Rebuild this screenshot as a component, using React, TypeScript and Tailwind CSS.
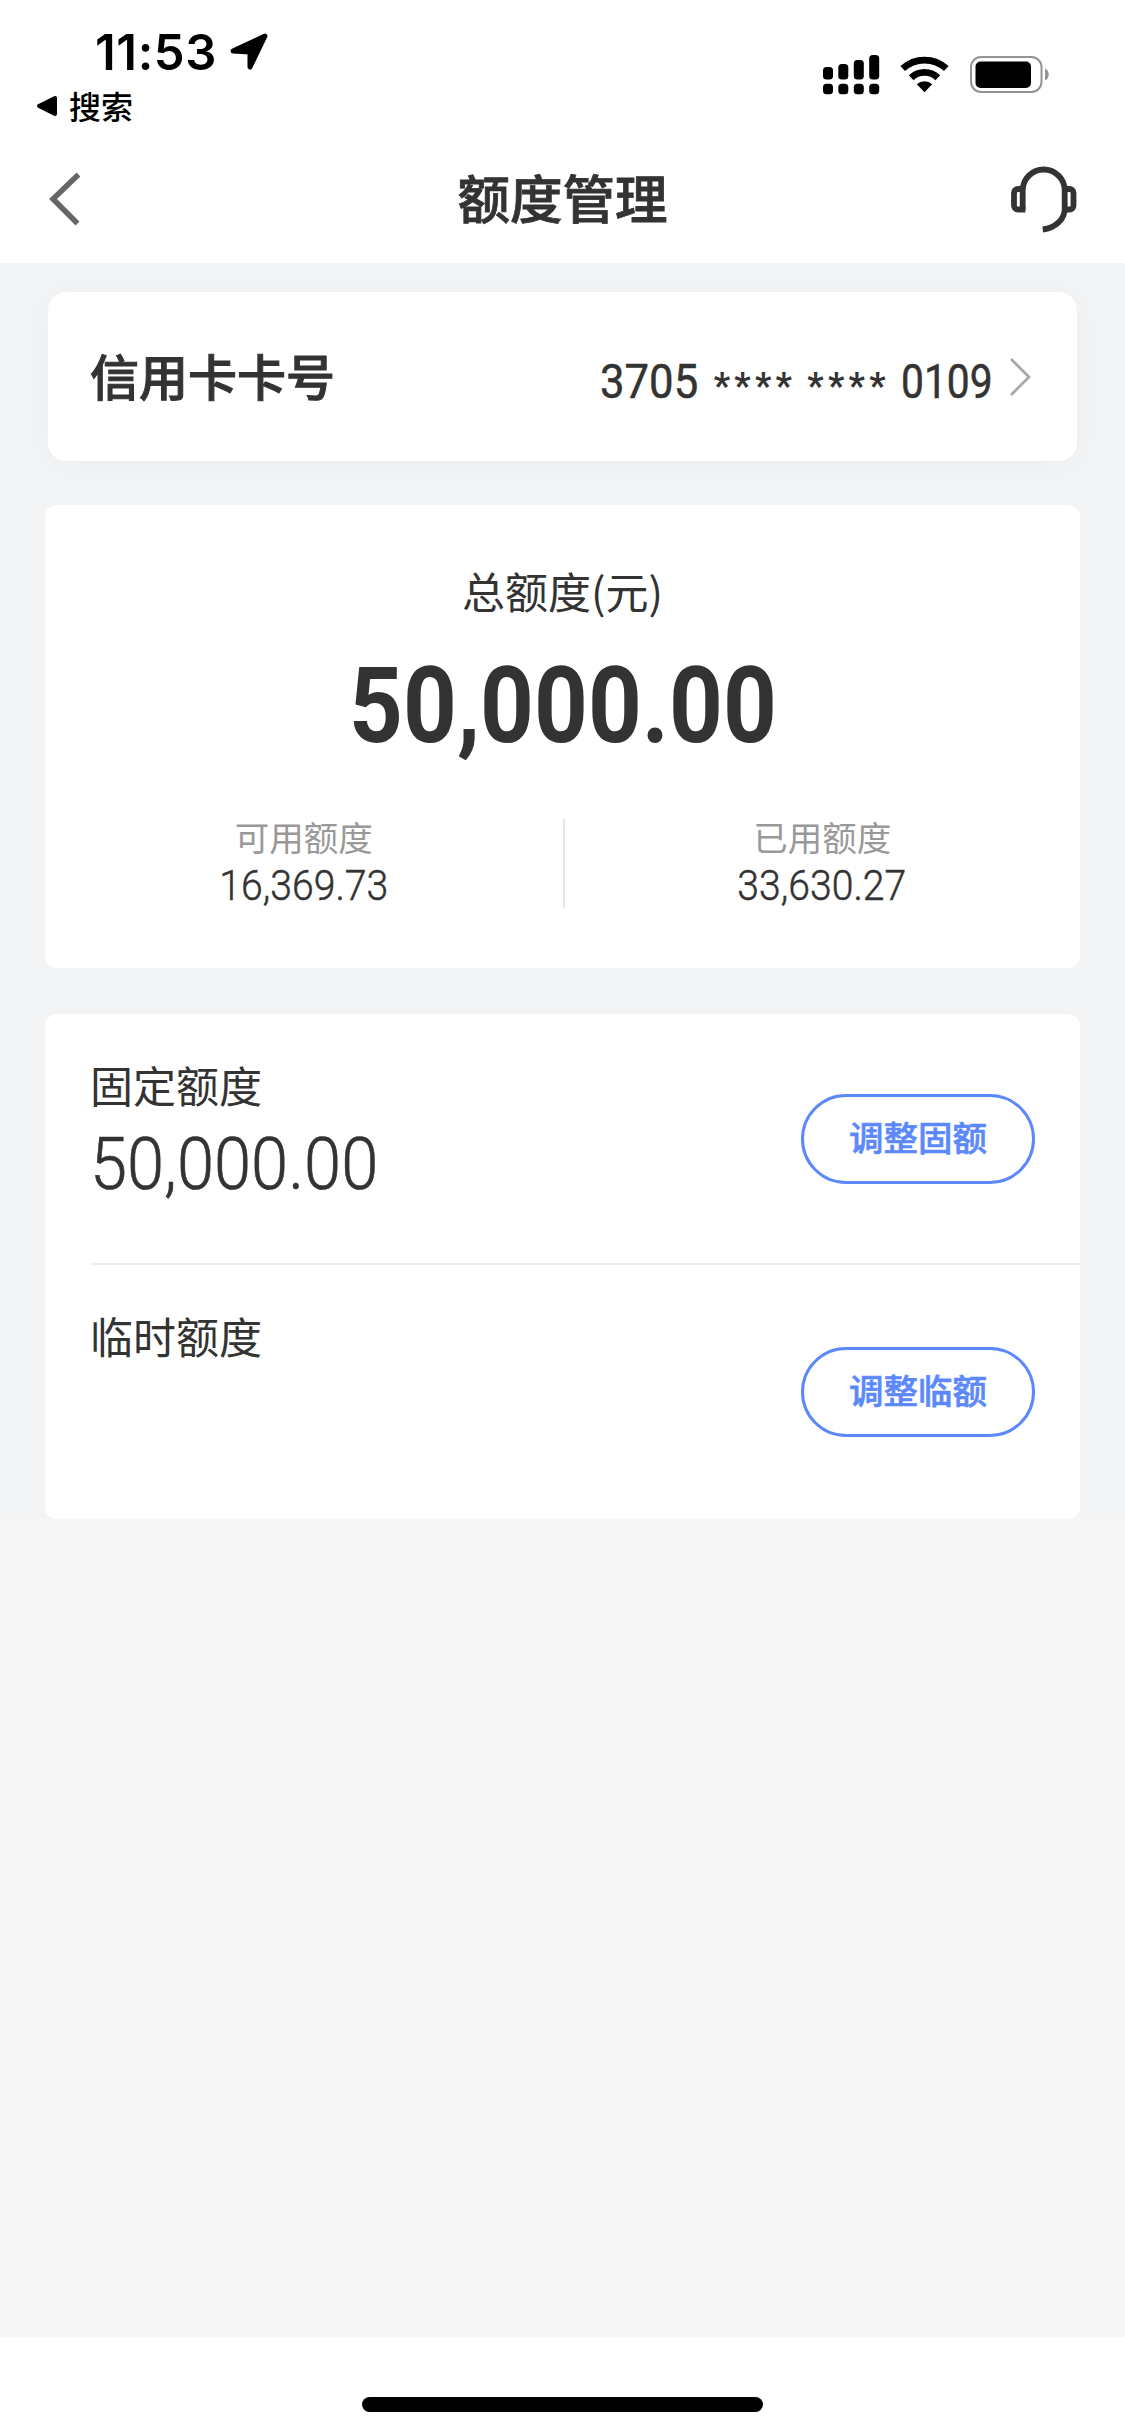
import React from 'react';
import { clsx } from 'clsx';

interface AmountProps {
    value: string;
    className?: string;
}

// Numbers use a narrow face, so Roboto is squeezed a little
const Amount: React.FC<AmountProps> = ({ value, className }) => (
    <span className={clsx("inline-block whitespace-nowrap font-['Roboto',sans-serif] leading-none", className)}>
        {value}
    </span>
);

const StatusBar: React.FC = () => (
    <div className="flex h-[136px] justify-between">
        <div className="pt-[23px]">
            <div className="flex h-[58px] items-center pl-[95px]">
                <span className="w-[135px] whitespace-nowrap font-['Inter',sans-serif] text-[49px] font-semibold leading-none tracking-[0.6px]">11:53</span>
                <svg className="h-[40px] w-[40px]" viewBox="0 0 40 40">
                    <path d="M3 19 35 4 20 35V20Z" fill="#000" stroke="#000" strokeWidth="5" strokeLinejoin="round" />
                </svg>
            </div>
            <div className="flex h-[50px] items-center pl-[36px]">
                <svg className="h-[22px] w-[22px]" viewBox="0 0 22 22">
                    <path d="M3 11 19 3V19Z" fill="#000" stroke="#000" strokeWidth="4" strokeLinejoin="round" />
                </svg>
                <span className="mb-[2px] ml-[11px] text-[32px] font-medium leading-none">搜索</span>
            </div>
        </div>
        <div className="flex items-start pr-[75px] pt-[54px]">
            <svg className="h-[42px] w-[58px]" viewBox="0 0 58 42">
                <rect x="0" y="13" width="10" height="12.5" rx="3.5" />
                <rect x="15.3" y="10" width="10" height="15.5" rx="3.5" />
                <rect x="30.8" y="6" width="10" height="19.5" rx="3.5" />
                <rect x="46.2" y="1" width="10" height="24.5" rx="3.5" />
                <rect x="0" y="29.7" width="10" height="10.5" rx="3.5" />
                <rect x="15.3" y="29.7" width="10" height="10.5" rx="3.5" />
                <rect x="30.8" y="29.7" width="10" height="10.5" rx="3.5" />
                <rect x="46.2" y="29.7" width="10" height="10.5" rx="3.5" />
            </svg>
            <svg className="ml-[19px] h-[40px] w-[50px]" viewBox="0 0 50 40">
                <path d="M2.700 14.600A32 32 0 0 1 46.300 14.600" fill="none" stroke="#000" strokeWidth="6.800" />
                <path d="M11.200 23.700A19.500 19.500 0 0 1 37.800 23.700" fill="none" stroke="#000" strokeWidth="6.800" />
                <path d="M16.800 30.200A11.300 11.300 0 0 1 32.200 30.200L24.500 38.300Z" />
            </svg>
            <svg className="ml-[20px] h-[40px] w-[80px]" viewBox="0 0 80 40">
                <rect x="1" y="3" width="70.5" height="35" rx="10" fill="none" stroke="#939393" strokeWidth="2" />
                <rect x="5.500" y="7.500" width="55.500" height="26.500" rx="5" />
                <path d="M75 14.500c5 2 5 10 0 12Z" fill="#939393" />
            </svg>
        </div>
    </div>
);

const NavBar: React.FC = () => (
    <div className="grid h-[127px] grid-cols-3 items-center px-[46px]">
        <svg className="mb-[2px] h-[60px] w-[36px]" viewBox="0 0 36 60">
            <path d="M32.500 5.500 7 30l24.500 24.500" fill="none" stroke="#666" strokeWidth="5.500" />
        </svg>
        <h1 className="mb-[6px] text-center text-[52.500px] font-medium leading-none text-[#333] [-webkit-text-stroke:0.8px_#333]">额度管理</h1>
        <svg className="mb-[2px] mr-px h-[70px] w-[70px] justify-self-end" viewBox="0 0 70 70">
            <g fill="none" stroke="#333" strokeWidth="5.800">
                <path d="M14.700 45.500V26.500a21 21 0 0 1 42 0V45c0 10-9 19-22 20.500" />
                <path d="M14.700 25H10a4 4 0 0 0-4 4v12.500a4 4 0 0 0 4 4h7.400" />
                <path d="M57 25h4.500a4 4 0 0 1 4 4v12.500a4 4 0 0 1-4 4H57" />
            </g>
        </svg>
    </div>
);

const CardNumber: React.FC = () => (
    <div className="mx-[3px] flex h-[169px] items-center justify-between rounded-[18px] bg-white pl-[42px] pr-[44px] shadow-[0_3px_30px_rgba(0,0,0,0.03)]">
        <span className="mb-[4px] text-[49px] font-medium leading-none [-webkit-text-stroke:1px_#333]">信用卡卡号</span>
        <div className="flex items-center">
            <div className="mt-[10px] flex h-[48px] w-[393px] items-center justify-between">
                <Amount value="3705" className="w-[98px] origin-left scale-x-[0.91] text-[48px] [-webkit-text-stroke:0.5px_#333]" />
                <Amount value="****" className="mt-[8px] w-[78px] text-[36px] font-bold tracking-[4.300px]" />
                <Amount value="****" className="mt-[8px] w-[78px] text-[36px] font-bold tracking-[4.300px]" />
                <Amount value="0109" className="w-[92px] origin-left scale-x-[0.85] text-[48px] [-webkit-text-stroke:0.5px_#333]" />
            </div>
            <svg className="ml-[14px] h-[40px] w-[26px]" viewBox="0 0 26 40">
                <path d="M4 2 22 20 4 38" fill="none" stroke="#aaa" strokeWidth="2.800" />
            </svg>
        </div>
    </div>
);

const quotas = [
    { label: '可用额度', value: '16,369.73' },
    { label: '已用额度', value: '33,630.27' },
];

const TotalQuota: React.FC = () => (
    <div className="mt-[44px] flex h-[463px] flex-col items-center rounded-[12px] bg-white pt-[64px]">
        <span className="text-[43px] leading-none">总额度(元)</span>
        <Amount value="50,000.00" className="mt-[42px] scale-x-[0.895] text-[105px] font-bold" />
        <div className="mt-[60px] grid w-full grid-cols-2">
            {quotas.map((quota, i) => (
                <div key={quota.label} className={clsx('flex h-[89px] flex-col items-center', i > 0 && 'border-l-2 border-[#e6e6e6]')}>
                    <span className="text-[34.500px] leading-none text-[#999]">{quota.label}</span>
                    <Amount value={quota.value} className="mt-[10px] scale-x-[0.91] text-[43px] font-light [-webkit-text-stroke:0.5px_#333]" />
                </div>
            ))}
        </div>
    </div>
);

interface QuotaRowProps {
    label: string;
    value?: string;
    action: string;
    className?: string;
}

const QuotaRow: React.FC<QuotaRowProps> = ({ label, value, action, className }) => (
    <div className={clsx('flex items-center justify-between pr-[45px]', className)}>
        <div className="h-full pt-[49px]">
            <div className="text-[43px] leading-none">{label}</div>
            {value && <Amount value={value} className="mt-[23px] origin-left scale-x-[0.928] text-[72px] font-light [-webkit-text-stroke:0.6px_#333]" />}
        </div>
        <button className="h-[90px] w-[234px] rounded-full border-[3px] border-[#5b88fb] pb-[5px] text-[34.500px] font-medium leading-none text-[#5b88fb] [-webkit-text-stroke:0.6px_#5b88fb]">
            {action}
        </button>
    </div>
);

const App: React.FC = () => (
    <div className="flex h-[2435px] w-[1125px] flex-col overflow-hidden bg-white font-['Noto_Sans_CJK_SC',sans-serif] text-black">
        <StatusBar />
        <NavBar />
        <main className="flex-1 bg-[#f7f7f7] text-[#333]">
            <div className="bg-[#f3f4f6] px-[45px] pt-[29px]">
                <CardNumber />
                <TotalQuota />
                <div className="mt-[46px] rounded-[12px] bg-white pl-[45px]">
                    <QuotaRow label="固定额度" value="50,000.00" action="调整固额" className="h-[249px]" />
                    <div className="border-t-2 border-[#ededed]">
                        <QuotaRow label="临时额度" action="调整临额" className="h-[254px]" />
                    </div>
                </div>
            </div>
        </main>
        <footer className="flex h-[98px] justify-center pt-[60px]">
            <div className="h-[15px] w-[401px] rounded-full bg-black" />
        </footer>
    </div>
);

export default App;
